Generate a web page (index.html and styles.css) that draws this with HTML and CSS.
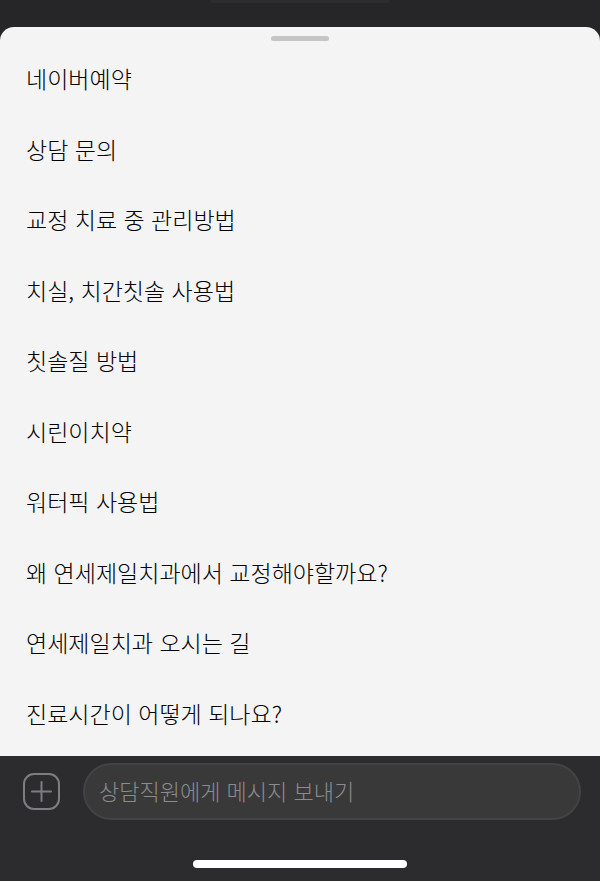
FILE: index.html
```html
<!DOCTYPE html>
<html lang="ko">
	<head>
		<meta charset="utf-8">
		<meta name="viewport" content="width=device-width, initial-scale=1">
		<title>상담 메뉴</title>
		<link rel="stylesheet" href="styles.css">
	</head>
	<body>
		<div class="backdrop">
			<div class="bubble"></div>
		</div>
		<main class="sheet">
			<div class="handle"></div>
			<ul class="menu">
				<li><button type="button">네이버예약</button></li>
				<li><button type="button">상담 문의</button></li>
				<li><button type="button">교정 치료 중 관리방법</button></li>
				<li><button type="button">치실, 치간칫솔 사용법</button></li>
				<li><button type="button">칫솔질 방법</button></li>
				<li><button type="button">시린이치약</button></li>
				<li><button type="button">워터픽 사용법</button></li>
				<li><button type="button">왜 연세제일치과에서 교정해야할까요?</button></li>
				<li><button type="button">연세제일치과 오시는 길</button></li>
				<li><button type="button">진료시간이 어떻게 되나요?</button></li>
			</ul>
		</main>
		<footer class="composer">
			<form class="composer-row">
				<button type="button" class="add" aria-label="추가">
					<svg viewBox="0 0 37 37" width="37" height="37" fill="none" stroke="currentColor" stroke-width="2" stroke-linecap="round">
						<rect x="1" y="1" width="35" height="35" rx="10"/>
						<path d="M18.5 9v19M9 18.5h19"/>
					</svg>
				</button>
				<input type="text" class="message" aria-label="메시지" placeholder="상담직원에게 메시지 보내기">
			</form>
			<div class="home-bar"></div>
		</footer>
	</body>
</html>
```

FILE: styles.css
```css
* {
	box-sizing: border-box;
}
body {
	margin: 0;
	min-height: 100vh;
	display: flex;
	flex-direction: column;
	background-color: #262628;
	color: #000;
	font-family: "Noto Sans CJK KR", sans-serif;
	font-weight: 300;
}
button, input {
	font: inherit;
	color: inherit;
}

.backdrop {
	height: 27px;
}
.bubble {
	width: 180px;
	height: 3px;
	margin: 0 auto;
	border-radius: 0 0 8px 8px;
	background-color: #2d2d2f;
}

.sheet {
	flex: 1;
	display: flex;
	flex-direction: column;
	padding: 9px 0 8px;
	border-radius: 14px 14px 0 0;
	background-color: #f4f4f4;
}
.handle {
	width: 58px;
	height: 5px;
	margin: 0 auto 2px;
	border-radius: 3px;
	background-color: #c5c5c5;
}
.menu {
	flex: 1;
	display: grid;
	grid-auto-rows: 1fr;
	list-style: none;
	margin: 0;
	padding: 0;
}
.menu button {
	display: block;
	width: 100%;
	height: 100%;
	padding: 0 26px;
	border: none;
	background: none;
	font-size: 23px;
	text-align: left;
}

.composer {
	padding: 7px 0 13px;
	background-color: #2c2c2e;
}
.composer-row {
	display: flex;
	align-items: center;
	gap: 23px;
	margin: 0 0 40px;
	padding: 0 19px 0 23px;
}
.add {
	display: flex;
	padding: 0;
	border: none;
	background: none;
	color: #7d7d82;
}
.message {
	flex: 1;
	min-width: 0;
	height: 57px;
	padding: 0 14px 4px;
	border: 2px solid #434345;
	border-radius: 29px;
	background-color: #39393a;
	font-size: 22px;
}
.message::placeholder {
	color: #8c8c8e;
	opacity: 1;
}
.home-bar {
	width: 214px;
	height: 8px;
	margin: 0 auto;
	border-radius: 4px;
	background-color: #fff;
}
```
